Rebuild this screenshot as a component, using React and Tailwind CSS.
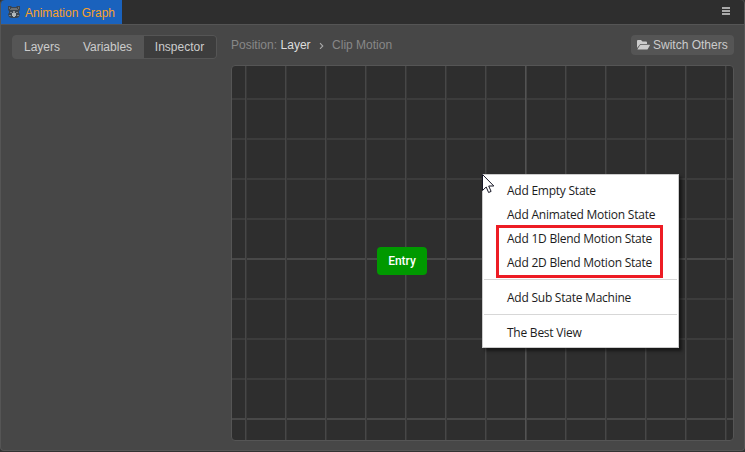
import React from "react";

const tabs = ["Layers", "Variables", "Inspector"];
const columns = Array.from({ length: 13 }, (_, i) => 13 + i * 40);
const rows = Array.from({ length: 9 }, (_, i) => 32 + i * 40);

function BearIcon() {
  return (
    <svg width="14" height="13" viewBox="0 0 14 13" className="shrink-0">
      <path d="M1 0h3l1 1h4l1-1h3v4l-1 1v2l1 1-1 3-2 1H4l-2-1-1-3 1-1V5L1 4z" fill="#3b444f" />
      <path d="M2 1h1v2H2zM11 1h1v2h-1zM4 2h6v1H4zM3 3h8v1H3z" fill="#6c7074" />
      <path d="M3 6h2v1H3zM9 6h2v1H9zM2 9h2v1H2zM10 9h2v1h-2z" fill="#7b8085" />
      <path d="M6 5h2v2H6z" fill="#8b9095" />
      <path d="M5 7h4v3H8v1H6v-1H5z" fill="#b3b8bb" />
    </svg>
  );
}

function FolderIcon() {
  return (
    <svg width="13" height="10" viewBox="0 0 13 10" className="shrink-0">
      <path d="M0 8V1Q0 0 1 0h3l1.5 1.5H9q1 0 1 1V4H4Q3 4 2.5 5z" fill="#ccc" />
      <path d="M.6 9 3 5.3Q3.3 4.8 4 4.8h8.4q.8 0 .4.7l-2 3.6q-.3.5-1 .5H.9Q.2 9.6.6 9z" fill="#ccc" />
    </svg>
  );
}

function Grid() {
  return (
    <svg width="501" height="374" className="block">
      {rows.map((y) => (
        <rect key={y} x="0" y={y} width="501" height="2" fill={y === 192 || y === 352 ? "#484848" : "#3c3c3c"} />
      ))}
      {columns.map((x) => (
        <g key={x}>
          <rect x={x} y="0" width="1" height="374" fill={x === 293 ? "#535353" : "#474747"} />
          <rect x={x + 1} y="0" width="1" height="374" fill={x === 293 ? "#444" : "#393939"} />
        </g>
      ))}
    </svg>
  );
}

function MenuItem({ children }) {
  return <div className="flex h-6 items-center whitespace-nowrap pl-6">{children}</div>;
}

function ContextMenu() {
  return (
    <div className="absolute left-[250px] top-[108px] h-[174px] w-[197px] border border-[#ccc] bg-white pt-1 font-['Open_Sans','Noto_Sans',sans-serif] text-[12px] tracking-[-0.24px] text-[#1c1c1c] shadow-[3px_3px_3px_rgba(0,0,0,0.5)]">
      <MenuItem>Add Empty State</MenuItem>
      <MenuItem>Add Animated Motion State</MenuItem>
      <MenuItem>Add 1D Blend Motion State</MenuItem>
      <MenuItem>Add 2D Blend Motion State</MenuItem>
      <div className="mx-px mb-[6px] mt-1 h-px bg-[#d7d7d7]" />
      <MenuItem>Add Sub State Machine</MenuItem>
      <div className="mx-px mb-[6px] mt-1 h-px bg-[#d7d7d7]" />
      <MenuItem>The Best View</MenuItem>
      <div className="absolute left-[13px] top-[50px] h-[53px] w-[167px] border-[3px] border-[#ed1c24]" />
      <svg width="13" height="20" viewBox="0 0 13 20" className="absolute left-[-1px] top-[-1px]">
        <path d="M.5.5v16l3.7-3.5 2.4 5.5 2.5-1.1-2.4-5.4h5.1z" fill="#fff" stroke="#161625" />
      </svg>
    </div>
  );
}

export default function App() {
  return (
    <div className="flex h-[452px] w-[745px] flex-col overflow-hidden bg-[#333] font-['Liberation_Sans',Arial,sans-serif] text-[12px] text-[#ccc]">
      <div className="flex h-[451px] w-[745px] flex-col rounded border border-t-0 border-[#555] bg-[#474747]">
        <header className="flex h-[25px] shrink-0 items-start justify-between rounded-t border-b border-[#555] bg-[#2e2e2e]">
          <div className="flex h-6 w-[121px] items-center rounded-tl bg-[#1a62bd] pl-[6px] text-[#f9a02a]">
            <BearIcon />
            <span className="ml-1 whitespace-nowrap pt-[2px]">Animation Graph</span>
          </div>
          <div className="mr-[14px] mt-[7px] flex flex-col gap-px">
            <i className="h-[2px] w-2 bg-[#aaa]" />
            <i className="h-[2px] w-2 bg-[#aaa]" />
            <i className="h-[2px] w-2 bg-[#aaa]" />
          </div>
        </header>
        <main className="flex min-h-0 flex-1">
          <aside className="w-[230px] shrink-0 pl-[11px] pt-[10px]">
            <nav className="flex h-6 w-[205px] overflow-hidden rounded border border-[#555] bg-[#555]">
              {tabs.map((tab, i) => (
                <button
                  key={tab}
                  className={
                    i === 0
                      ? "w-[59px] pb-px pr-px"
                      : i === 1
                        ? "w-[72px] pb-px pr-px"
                        : "w-[72px] bg-[#3d3d3d] pb-px pr-px"
                  }
                >
                  {tab}
                </button>
              ))}
            </nav>
          </aside>
          <section className="flex w-[503px] flex-col pt-[10px]">
            <div className="flex h-5 items-center justify-between">
              <div className="flex items-center whitespace-nowrap text-[#888]">
                <span>Position:</span>
                <span className="ml-[3.5px] text-[#ddd]">Layer</span>
                <svg width="5" height="7" viewBox="0 0 5 7" className="ml-[8px] mr-[8.5px]">
                  <path d="M1 1.2 3.8 4 1 6.8" fill="none" stroke="#aaa" strokeWidth="1.1" />
                </svg>
                <span>Clip Motion</span>
              </div>
              <button className="flex h-5 w-[103px] items-center gap-[3px] whitespace-nowrap rounded bg-[#555] pl-[6px]">
                <FolderIcon />
                <span>Switch Others</span>
              </button>
            </div>
            <div className="relative mt-[10px] h-[376px] w-[503px] rounded border border-[#555] bg-[#2e2e2e]">
              <Grid />
              <div className="absolute left-[145px] top-[181px] flex h-7 w-[50px] items-center justify-center rounded bg-[#090] font-[Roboto,sans-serif] font-medium text-white">
                Entry
              </div>
              <ContextMenu />
            </div>
          </section>
        </main>
      </div>
    </div>
  );
}
